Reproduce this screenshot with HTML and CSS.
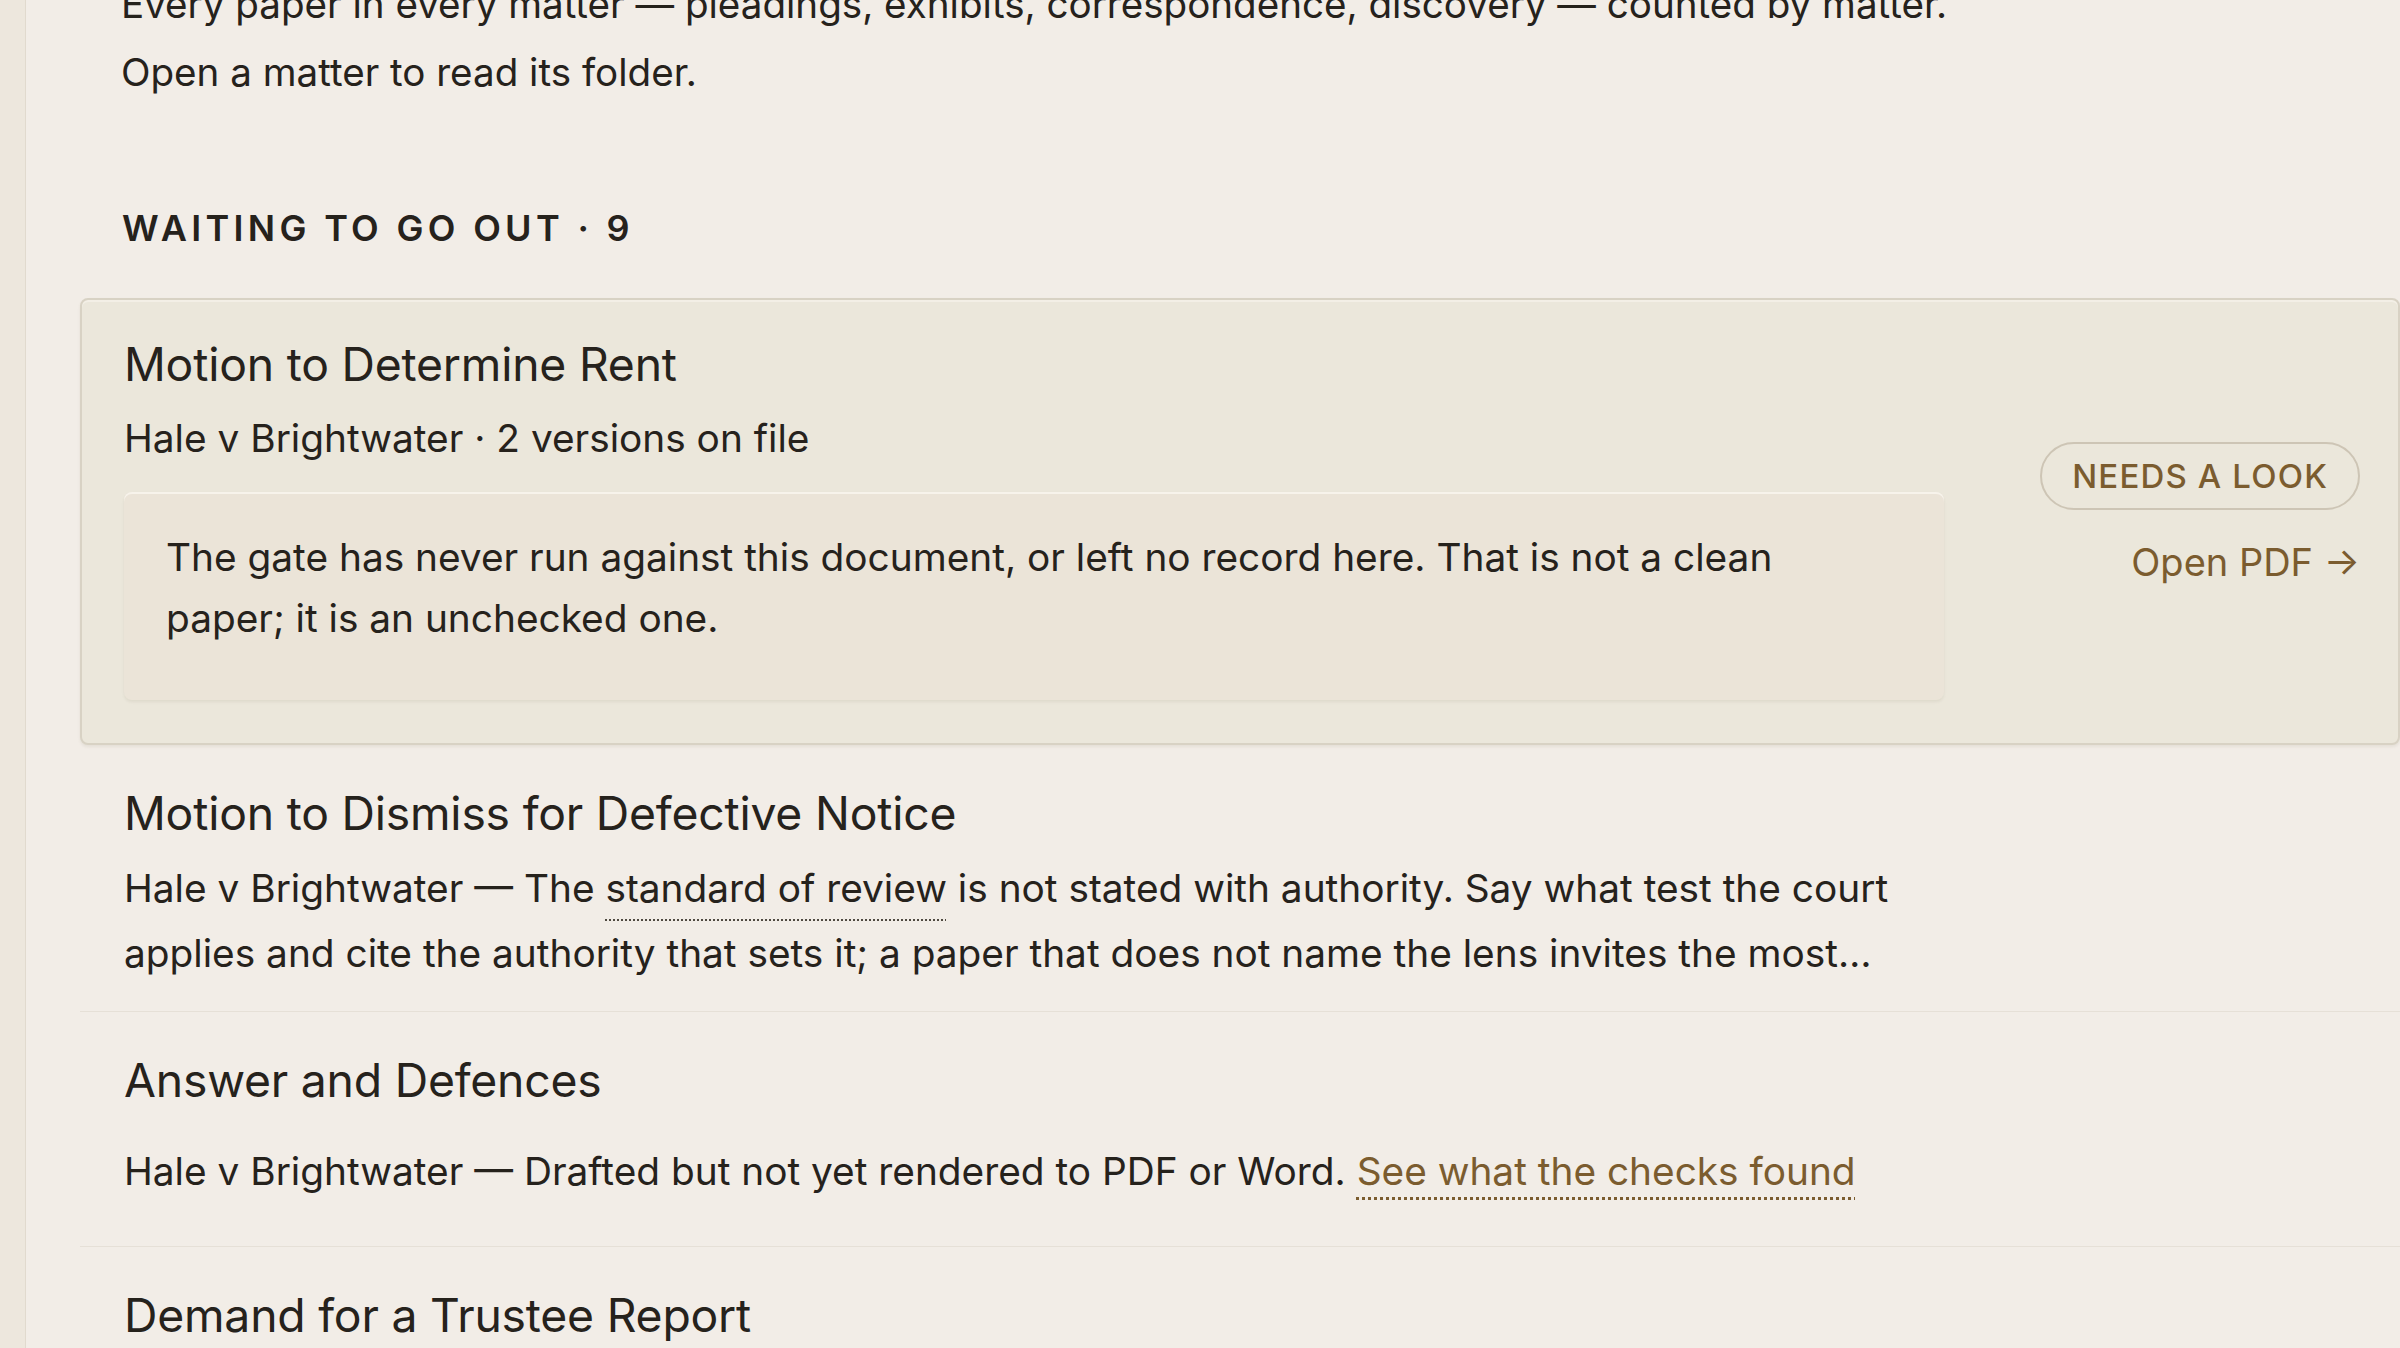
FILE: index.html
```html
<!DOCTYPE html>
<html lang="en">
<head>
<meta charset="utf-8">
<title>Papers</title>
<link rel="stylesheet" href="styles.css">
</head>
<body>
<div class="app">
  <aside class="rail"></aside>
  <main class="main">
    <p class="intro">Every paper in every matter — pleadings, exhibits, correspondence, discovery — counted by matter.<br>Open a matter to read its folder.</p>

    <h2 class="section-label">Waiting to go out · 9</h2>

    <ul class="papers">
      <li class="paper paper--flagged">
        <div class="paper-body">
          <h3 class="paper-title">Motion to Determine Rent</h3>
          <p class="paper-meta">Hale v Brightwater · 2 versions on file</p>
          <div class="notice">
            <p>The gate has never run against this document, or left no record here. That is not a clean paper; it is an unchecked one.</p>
          </div>
        </div>
        <div class="paper-side">
          <span class="pill">Needs a look</span>
          <a class="open-link" href="#">Open PDF →</a>
        </div>
      </li>
      <li class="paper">
        <div class="paper-body">
          <h3 class="paper-title">Motion to Dismiss for Defective Notice</h3>
          <p class="paper-desc clamp">Hale v Brightwater — The <span class="term">standard of review</span> is not stated with authority. Say what test the court applies and cite the authority that sets it; a paper that does not name the lens invites the most…</p>
        </div>
      </li>
      <li class="paper">
        <div class="paper-body">
          <h3 class="paper-title">Answer and Defences</h3>
          <p class="paper-desc">Hale v Brightwater — Drafted but not yet rendered to PDF or Word. <a class="checks-link" href="#">See what the checks found</a></p>
        </div>
      </li>
      <li class="paper">
        <div class="paper-body">
          <h3 class="paper-title">Demand for a Trustee Report</h3>
          <p class="paper-desc">Hale v Brightwater — Waiting on the trustee's figures before it can be served.</p>
        </div>
      </li>
    </ul>
  </main>
</div>
</body>
</html>
```

FILE: styles.css
```css
* { box-sizing: border-box; }

html, body {
  margin: 0;
  height: 100%;
  overflow: hidden;
}

body {
  background: #f2ede7;
  color: #26221c;
  font-family: Inter, "Noto Sans", "Liberation Sans", sans-serif;
}

.app {
  display: flex;
  min-height: 100%;
}

.rail {
  flex: 0 0 26px;
  background: #ede7dd;
  border-right: 1px solid #e1dace;
}

.main {
  flex: 1;
  min-width: 0;
  padding-left: 54px;
}

.intro {
  margin: -30px 0 0;
  padding-left: 41px;
  font-size: 38.6px;
  line-height: 68px;
}

.section-label {
  margin: 101px 0 0;
  padding-left: 42px;
  font-size: 36px;
  line-height: 43px;
  font-weight: 600;
  letter-spacing: 0.12em;
  text-transform: uppercase;
}

.papers {
  list-style: none;
  margin: 48px 0 0;
  padding: 0;
}

.paper {
  display: grid;
  grid-template-columns: 1820px minmax(0, 1fr);
  column-gap: 92px;
  padding: 38px 38px 26px 44px;
  border-bottom: 1px solid #e6e0d7;
}

.paper--flagged {
  padding: 34px 38px 43px 42px;
  background: #ebe7db;
  border: 2px solid #d8d2c4;
  border-radius: 8px;
  box-shadow: inset 0 2px 0 #f3efe6, 0 2px 3px rgba(120, 105, 80, 0.10);
}

.paper-title {
  margin: 0;
  font-size: 46.3px;
  line-height: 60px;
  font-weight: 400;
  letter-spacing: -0.2px;
}

.paper-meta {
  margin: 13px 0 0;
  font-size: 38.8px;
  line-height: 61px;
}

.paper-desc {
  margin: 12px 0 0;
  font-size: 38.8px;
  line-height: 65px;
}

.clamp {
  display: -webkit-box;
  -webkit-box-orient: vertical;
  -webkit-line-clamp: 2;
  overflow: hidden;
}

.term {
  text-decoration: underline dotted #4f4940;
  text-decoration-thickness: 2px;
  text-underline-offset: 17px;
}

.checks-link {
  display: inline-block;
  padding: 16px 0 17px;
  color: #7b5c2f;
  text-decoration: underline dotted #7b5c2f;
  text-decoration-thickness: 3px;
  text-underline-offset: 12px;
}

.notice {
  margin-top: 24px;
  padding: 34px 64px 52px 42px;
  background: #ebe4d8;
  border-radius: 8px;
  box-shadow: inset 0 2px 0 #f7f3eb, 0 2px 3px rgba(120, 105, 80, 0.10);
}

.notice p {
  margin: 0;
  font-size: 38.8px;
  line-height: 61px;
}

.paper-side {
  align-self: center;
  display: flex;
  flex-direction: column;
  align-items: flex-end;
  gap: 22px;
}

.pill {
  display: inline-flex;
  align-items: center;
  height: 68px;
  padding: 0 30px;
  border: 2px solid #cdc5b5;
  border-radius: 34px;
  color: #7b5c2f;
  font-size: 33px;
  font-weight: 500;
  letter-spacing: 0.035em;
  text-transform: uppercase;
  white-space: nowrap;
}

.open-link {
  color: #7b5c2f;
  font-size: 38px;
  line-height: 60px;
  text-decoration: none;
  white-space: nowrap;
}
```
